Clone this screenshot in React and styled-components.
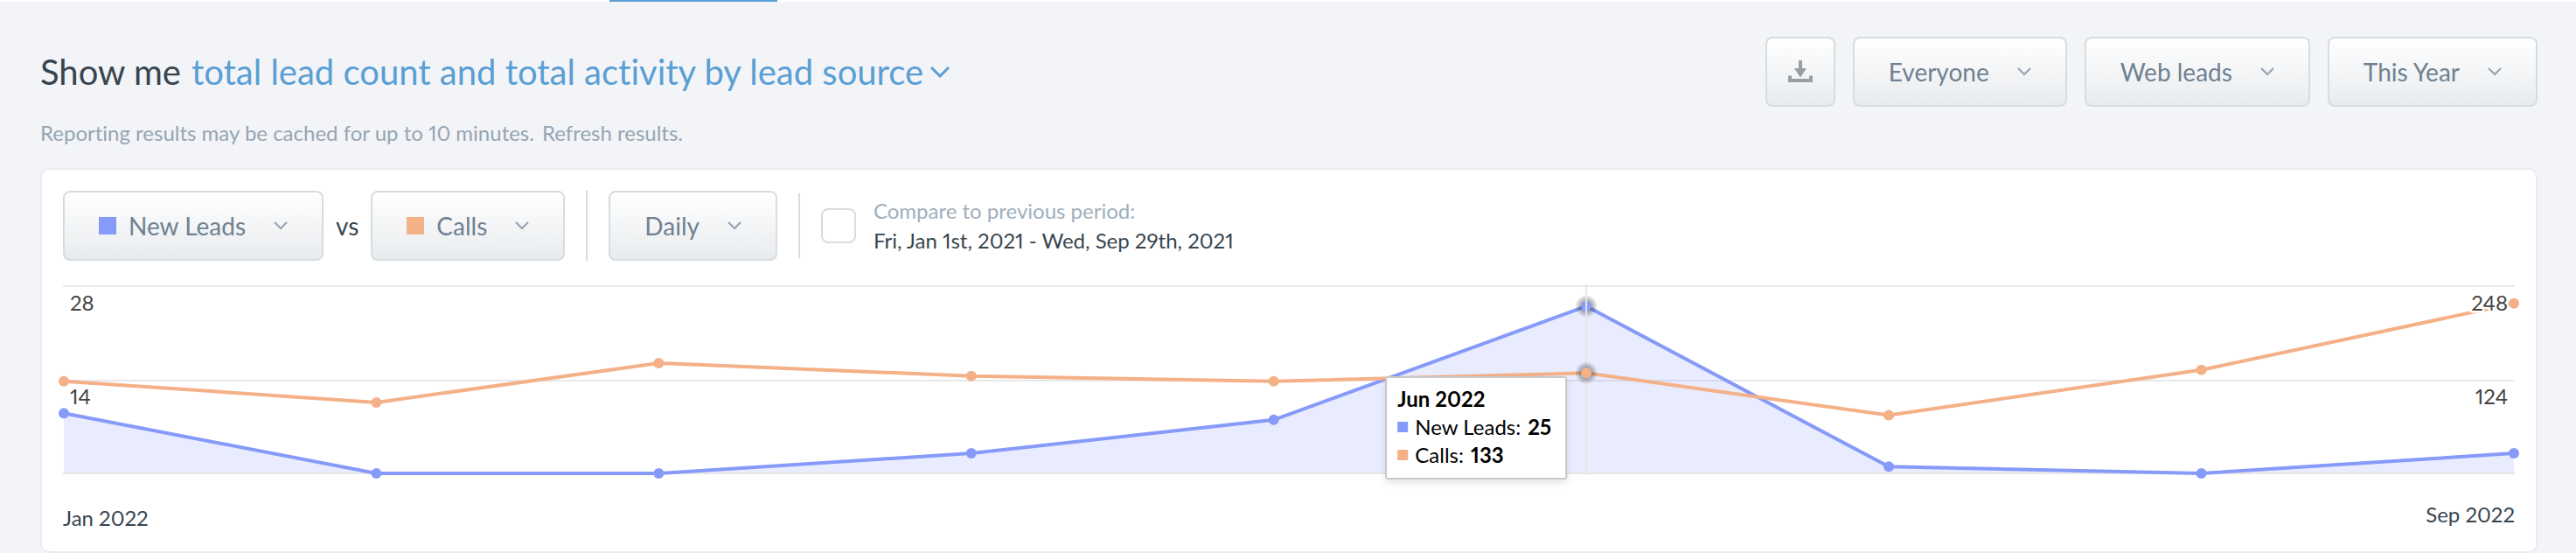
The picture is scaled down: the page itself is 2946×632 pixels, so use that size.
import React, { useLayoutEffect, useRef, useState } from 'react';
import styled, { createGlobalStyle } from 'styled-components';

const BLUE = '#869af9';
const ORANGE = '#f4b087';

const GlobalStyle = createGlobalStyle`
  * {
    box-sizing: border-box;
  }

  body {
    margin: 0;
    background: #f2f4f8;
    color: #38454f;
    font-family: Lato, 'Open Sans', sans-serif;
    font-size: 24px;
    line-height: 28px;
    font-variant-ligatures: none;
    font-variant-numeric: proportional-nums;
  }

  button,
  select {
    font: inherit;
    font-variant-ligatures: none;
  }
`;

const NavEdge = styled.div`
  display: flex;
  height: 2px;
  padding-left: 697px;
  background: #fff;
`;

const ActiveTab = styled.div`
  width: 192px;
  background: #5a9fd4;
`;

const Page = styled.main`
  padding: 40px 44px 0 46px;
`;

const Header = styled.header`
  display: flex;
  align-items: center;
  justify-content: space-between;
`;

const Title = styled.h1`
  display: flex;
  align-items: center;
  gap: 12px;
  margin: 0;
  font-size: 40px;
  font-weight: 400;
  line-height: 48px;
`;

const ReportButton = styled.button`
  display: flex;
  align-items: center;
  gap: 8px;
  padding: 0;
  border: none;
  background: none;
  color: #5a9fd4;
  cursor: pointer;
`;

const Filters = styled.div`
  display: flex;
  gap: 20px;
`;

const buttonFace = `
  height: 80px;
  border: 2px solid #d6dde0;
  border-radius: 8px;
  background: linear-gradient(#fff, #e8ebee);
`;

const IconButton = styled.button`
  ${buttonFace}
  display: flex;
  align-items: center;
  justify-content: center;
  width: 80px;
  padding: 0;
  color: #9b9ea1;
  cursor: pointer;
`;

const SelectBox = styled.label`
  ${buttonFace}
  display: flex;
  align-items: center;
  padding: 0 39px;
  color: #93a3b3;
`;

const Select = styled.select`
  appearance: none;
  padding: 0;
  margin-right: 32px;
  border: none;
  background: none;
  color: #6f8191;
  font-size: 28px;
  line-height: 36px;
  field-sizing: content;
  cursor: pointer;
`;

const Swatch = styled.span`
  width: ${(props) => props.$size}px;
  height: ${(props) => props.$size}px;
  margin-right: ${(props) => (props.$size > 12 ? 14 : 8)}px;
  background: ${(props) => props.$color};
`;

const Notice = styled.p`
  display: flex;
  gap: 9px;
  margin: 16px 0 26px;
  color: #96a5b2;
`;

const RefreshLink = styled.a`
  color: inherit;
  text-decoration: none;
`;

const Card = styled.section`
  padding: 24px;
  border: 2px solid #e8ecf0;
  border-radius: 10px;
  background: #fff;
`;

const Controls = styled.div`
  display: flex;
  align-items: center;
  gap: 24px;
  margin-bottom: 28px;
`;

const Series = styled.div`
  display: flex;
  align-items: center;
  gap: 14px;
  font-size: 28px;
`;

const Divider = styled.div`
  width: 2px;
  height: ${(props) => props.$height}px;
  background: #d9dcde;
`;

const Compare = styled.label`
  display: flex;
  align-items: center;
  gap: 20px;
  cursor: pointer;
`;

const Checkbox = styled.input`
  appearance: none;
  width: 40px;
  height: 40px;
  margin: 0;
  border: 2px solid #d6dde0;
  border-radius: 8px;
  background: #fff;

  &:checked {
    background: #5a9fd4;
  }
`;

const CompareText = styled.span`
  display: flex;
  flex-direction: column;
  gap: 6px;
`;

const Muted = styled.span`
  color: #a0afbc;
`;

const ChartArea = styled.div`
  position: relative;
`;

const ChartSvg = styled.svg`
  display: block;
  width: 100%;
  height: 216px;
  overflow: visible;
`;

const AxisLabel = styled.text`
  fill: #444;
  stroke: #fff;
  stroke-width: 5px;
  stroke-linejoin: round;
  paint-order: stroke;
`;

const Tooltip = styled.div`
  position: absolute;
  padding: 8px 16px 10px 12px;
  border: 2px solid #c8c8c8;
  border-radius: 3px;
  background: #fff;
  box-shadow: 0 4px 8px rgba(0, 0, 0, 0.1);
  color: #000;
  line-height: 32px;
  white-space: nowrap;
  transform: translateX(-100%);
`;

const TooltipRow = styled.div`
  display: flex;
  align-items: center;
`;

const TooltipValue = styled.strong`
  margin-left: 8px;
`;

const DateAxis = styled.div`
  display: flex;
  justify-content: space-between;
  height: 32px;
  margin-top: 32px;
`;

const AxisDate = styled.span`
  align-self: ${(props) => props.$align};
`;

const points = [
  { day: 0, label: 'Jan 2022', leads: 9, calls: 122 },
  { day: 31, label: 'Feb 2022', leads: 0, calls: 94 },
  { day: 59, label: 'Mar 2022', leads: 0, calls: 146 },
  { day: 90, label: 'Apr 2022', leads: 3, calls: 129 },
  { day: 120, label: 'May 2022', leads: 8, calls: 122 },
  { day: 151, label: 'Jun 2022', leads: 25, calls: 133 },
  { day: 181, label: 'Jul 2022', leads: 1, calls: 77 },
  { day: 212, label: 'Aug 2022', leads: 0, calls: 137 },
  { day: 243, label: 'Sep 2022', leads: 3, calls: 225 },
];

const BASE = 215;
const HEIGHT = 214;

const Chevron = ({ width = 16, stroke = 2 }) => (
  <svg width={width} height={width / 2 + 2} viewBox={`0 0 ${width} ${width / 2 + 2}`} aria-hidden="true">
    <path
      d={`M1 1 L${width / 2} ${width / 2} L${width - 1} 1`}
      fill="none"
      stroke="currentColor"
      strokeWidth={stroke}
    />
  </svg>
);

const DownloadIcon = () => (
  <svg width="28" height="26" viewBox="0 0 28 26" aria-hidden="true">
    <path d="M12 0H16V9H21L14 19.500L7 9H12Z" fill="currentColor" />
    <path d="M0 17.500H4V21H24V17.500H28V25H0Z" fill="currentColor" />
  </svg>
);

const Dropdown = ({ label, options, color }) => (
  <SelectBox>
    {color && <Swatch $size={20} $color={color} />}
    <Select aria-label={label}>
      {options.map((option) => (
        <option key={option}>{option}</option>
      ))}
    </Select>
    <Chevron />
  </SelectBox>
);

const Marker = ({ x, y, color, active }) => (
  <g>
    {active && [12, 10, 8].map((r) => <circle key={r} cx={x} cy={y} r={r} fill="#000" opacity="0.1" />)}
    <circle cx={x} cy={y} r="6" fill={color} />
  </g>
);

const Chart = () => {
  const ref = useRef(null);
  const [width, setWidth] = useState(0);
  const [active, setActive] = useState(5);

  useLayoutEffect(() => {
    const measure = () => setWidth(ref.current.clientWidth);
    measure();
    const observer = new ResizeObserver(measure);
    observer.observe(ref.current);
    return () => observer.disconnect();
  }, []);

  const x = (p) => 1 + (p.day / 243) * (width - 2);
  const leadsY = (p) => BASE - (p.leads / 28) * HEIGHT;
  const callsY = (p) => BASE - (p.calls / 248) * HEIGHT;
  const line = (y) => points.map((p) => `${x(p)},${y(p)}`).join(' ');
  const current = points[active];

  return (
    <ChartArea ref={ref}>
      <ChartSvg>
        {[1, 109, 215].map((y) => (
          <line key={y} x1="0" x2={width} y1={y} y2={y} stroke="#e8e8e8" strokeWidth="2" />
        ))}
        <polygon
          points={`1,214 ${line(leadsY)} ${width - 1},214`}
          fill={BLUE}
          opacity="0.19"
        />
        <polyline points={line(leadsY)} fill="none" stroke={BLUE} strokeWidth="4" />
        {points.map((p, i) => (
          <Marker key={p.day} x={x(p)} y={leadsY(p)} color={BLUE} active={i === active} />
        ))}
        <line x1={x(current)} x2={x(current)} y1="-1" y2="217" stroke="#e6e6e8" strokeWidth="2" />
        <polyline points={line(callsY)} fill="none" stroke={ORANGE} strokeWidth="4" />
        <AxisLabel x="8" y="29">28</AxisLabel>
        <AxisLabel x="8" y="136">14</AxisLabel>
        <AxisLabel x={width - 8} y="29" textAnchor="end">248</AxisLabel>
        <AxisLabel x={width - 8} y="136" textAnchor="end">124</AxisLabel>
        {points.map((p, i) => (
          <g key={p.day} onMouseEnter={() => setActive(i)}>
            <Marker x={x(p)} y={callsY(p)} color={ORANGE} active={i === active} />
          </g>
        ))}
      </ChartSvg>
      <Tooltip style={{ left: x(current) - 22, top: callsY(current) + 4 }}>
        <strong>{current.label}</strong>
        <TooltipRow>
          <Swatch $size={12} $color={BLUE} />
          New Leads:
          <TooltipValue>{current.leads}</TooltipValue>
        </TooltipRow>
        <TooltipRow>
          <Swatch $size={12} $color={ORANGE} />
          Calls:
          <TooltipValue>{current.calls}</TooltipValue>
        </TooltipRow>
      </Tooltip>
    </ChartArea>
  );
};

const App = () => {
  return (
    <>
      <GlobalStyle />
      <NavEdge>
        <ActiveTab />
      </NavEdge>
      <Page>
        <Header>
          <Title>
            Show me
            <ReportButton>
              total lead count and total activity by lead source
              <Chevron width={22} stroke={3} />
            </ReportButton>
          </Title>
          <Filters>
            <IconButton aria-label="Download">
              <DownloadIcon />
            </IconButton>
            <Dropdown label="User" options={['Everyone']} />
            <Dropdown label="Lead type" options={['Web leads']} />
            <Dropdown label="Date range" options={['This Year']} />
          </Filters>
        </Header>
        <Notice>
          Reporting results may be cached for up to 10 minutes.
          <RefreshLink href="#refresh">Refresh results.</RefreshLink>
        </Notice>

        <Card>
          <Controls>
            <Series>
              <Dropdown label="First series" options={['New Leads']} color={BLUE} />
              vs
              <Dropdown label="Second series" options={['Calls']} color={ORANGE} />
            </Series>
            <Divider $height={80} />
            <Dropdown label="Interval" options={['Daily']} />
            <Divider $height={74} />
            <Compare>
              <Checkbox type="checkbox" />
              <CompareText>
                <Muted>Compare to previous period:</Muted>
                <span>Fri, Jan 1st, 2021 - Wed, Sep 29th, 2021</span>
              </CompareText>
            </Compare>
          </Controls>
          <Chart />
          <DateAxis>
            <AxisDate $align="flex-end">Jan 2022</AxisDate>
            <AxisDate $align="flex-start">Sep 2022</AxisDate>
          </DateAxis>
        </Card>
      </Page>
    </>
  );
};

export default App;
